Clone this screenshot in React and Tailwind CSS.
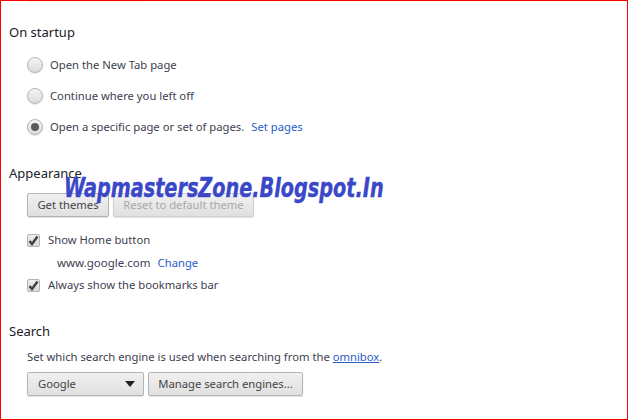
const font = { fontFamily: '"Noto Sans", "Open Sans", sans-serif' };

function Radio({ checked }) {
  return (
    <span className="w-[16px] h-[16px] rounded-full border border-[#b4b4b4] bg-gradient-to-b from-[#f4f4f4] to-[#dcdcdc] flex items-center justify-center shrink-0 shadow-[0_1px_1px_rgba(0,0,0,0.1)]">
      {checked && <span className="w-[8px] h-[8px] rounded-full bg-[#5a5a5a]" />}
    </span>
  );
}

function Check() {
  return (
    <span className="w-[13px] h-[13px] rounded-[2px] border border-[#b4b4b4] bg-gradient-to-b from-[#eeeeee] to-[#d8d8d8] flex items-center justify-center shrink-0">
      <svg width="11" height="11" viewBox="0 0 11 11">
        <path d="M1.5 6 L4 9 L9.5 1.5" fill="none" stroke="#404040" strokeWidth="2.4" />
      </svg>
    </span>
  );
}

function Btn({ children, disabled, className = "" }) {
  return (
    <div className={`h-[24px] flex items-center justify-center border rounded-[2px] bg-gradient-to-b from-[#f0f0f0] to-[#e0e0e0] text-[11.25px] shadow-[0_1px_1px_rgba(0,0,0,0.12)] ${disabled ? "border-[#d0d0d0] text-[#a8a8a8]" : "border-[#b4b4b4] text-[#444]"} ${className}`}>
      {children}
    </div>
  );
}

export default function App() {
  return (
    <div className="relative w-[628px] h-[420px] bg-white border border-[#ff0000] overflow-hidden pl-[8px] pt-[22px] text-[11.25px] text-[#404050]" style={font}>
      <div className="absolute left-[27px] top-0 w-[116px] h-px bg-[#f4f4f4]" />
      <h2 className="text-[13px] leading-[19px] text-[#202028]">On startup</h2>
      <div className="ml-[18px] mt-[15px] flex flex-col gap-[15px]">
        <label className="flex items-center gap-[7px] h-[16px]"><Radio /><span>Open the New Tab page</span></label>
        <label className="flex items-center gap-[7px] h-[16px]"><Radio /><span>Continue where you left off</span></label>
        <label className="flex items-center gap-[7px] h-[16px]"><Radio checked /><span>Open a specific page or set of pages.</span><span className="text-[#2a5cc8]">Set pages</span></label>
      </div>

      <h2 className="mt-[29px] text-[13px] leading-[19px] text-[#202028]">Appearance</h2>
      <div className="ml-[18px] mt-[10px] flex gap-[4px]">
        <Btn className="w-[82px]">Get themes</Btn>
        <Btn disabled className="w-[141px]">Reset to default theme</Btn>
      </div>
      <label className="ml-[18px] mt-[15px] flex items-center gap-[8px] h-[16px]"><Check /><span>Show Home button</span></label>
      <div className="ml-[48px] mt-[7px] h-[16px] flex items-center gap-[7px]"><span className="text-[11.5px]">www.google.com</span><span className="text-[#2a5cc8]">Change</span></div>
      <label className="ml-[18px] mt-[6px] flex items-center gap-[8px] h-[16px]"><Check /><span>Always show the bookmarks bar</span></label>

      <h2 className="mt-[29px] text-[13px] leading-[19px] text-[#202028]">Search</h2>
      <p className="ml-[18px] mt-[8px] leading-[16px]">Set which search engine is used when searching from the <span className="text-[#2a5cc8] underline">omnibox</span>.</p>
      <div className="ml-[18px] mt-[7px] flex gap-[4px]">
        <Btn className="w-[117px] !justify-between px-[10px]">
          <span>Google</span>
          <svg width="10" height="6" viewBox="0 0 10 6" className="mr-[-2px]"><path d="M0 0 H10 L5 6 Z" fill="#222" /></svg>
        </Btn>
        <Btn className="w-[155px]">Manage search engines...</Btn>
      </div>

      <div className="absolute left-[63px] top-[172px] origin-left scale-x-[0.74] whitespace-nowrap text-[26px] leading-[30px] font-bold italic text-[#3a48c8] [-webkit-text-stroke:0.4px_#3a48c8]" style={{ fontFamily: '"DejaVu Sans", sans-serif' }}>
        WapmastersZone.Blogspot.In
      </div>
    </div>
  );
}
